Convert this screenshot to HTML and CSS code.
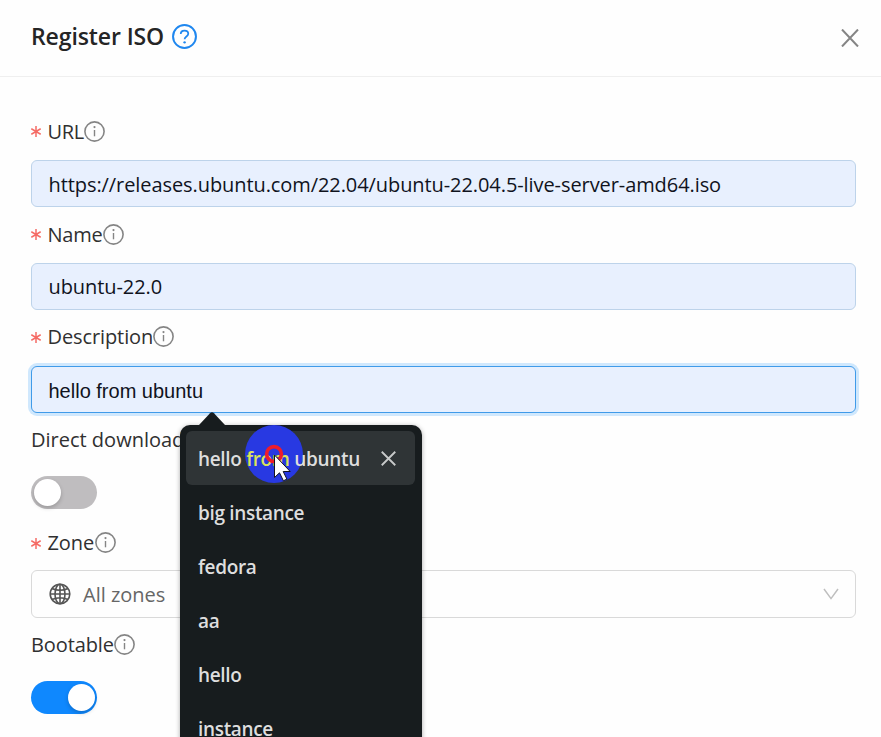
FILE: index.html
```html
<!DOCTYPE html>
<html lang="en">
<head>
<meta charset="utf-8">
<title>Register ISO</title>
<link rel="stylesheet" href="styles.css">
</head>
<body>
<svg class="defs" aria-hidden="true">
  <symbol id="info" viewBox="0 0 22 22"><circle cx="10.5" cy="10.5" r="9.6" fill="none" stroke="currentColor" stroke-width="1.6"/><path d="M10.5 9v6.3" stroke="currentColor" stroke-width="1.4"/><circle cx="10.5" cy="6.1" r="1.1" fill="currentColor"/></symbol>
</svg>
<header class="header">
  <h1 class="title">Register ISO</h1>
  <svg class="help" viewBox="0 0 24 24"><circle cx="12" cy="12" r="11" fill="none" stroke="currentColor" stroke-width="1.9"/><path d="M8.4 9.6C8.4 7.5 10 6.3 12 6.3s3.6 1.2 3.6 3.1c0 2.5-3.5 2.7-3.5 5.2" fill="none" stroke="currentColor" stroke-width="1.7"/><circle cx="12.1" cy="17.6" r="1.15" fill="currentColor"/></svg>
  <svg class="close" viewBox="0 0 18 18"><path d="M1 .5 17 17.5M17 .5 1 17.5" stroke="currentColor" stroke-width="2"/></svg>
</header>
<main class="form">
  <section class="item">
    <div class="label"><svg class="star" viewBox="0 0 10 11"><path d="M5 0v11M.3 2.7l9.4 5.6M9.7 2.7.3 8.3"/></svg><span class="t-url">URL</span><svg class="info"><use href="#info"/></svg></div>
    <div class="input"><span class="value">https://releases.ubuntu.com/22.04/ubuntu-22.04.5-live-server-amd64.iso</span></div>
  </section>
  <section class="item">
    <div class="label"><svg class="star" viewBox="0 0 10 11"><path d="M5 0v11M.3 2.7l9.4 5.6M9.7 2.7.3 8.3"/></svg><span class="t-name">Name</span><svg class="info"><use href="#info"/></svg></div>
    <div class="input"><span class="value">ubuntu-22.0</span></div>
  </section>
  <section class="item">
    <div class="label"><svg class="star" viewBox="0 0 10 11"><path d="M5 0v11M.3 2.7l9.4 5.6M9.7 2.7.3 8.3"/></svg><span class="t-desc">Description</span><svg class="info"><use href="#info"/></svg></div>
    <div class="input focused"><span class="preview">hello from ubuntu</span></div>
  </section>
  <section class="item">
    <div class="label"><span class="t-direct">Direct download</span></div>
    <div class="switch"><i class="knob"></i></div>
  </section>
  <section class="item item-zone">
    <div class="label"><svg class="star" viewBox="0 0 10 11"><path d="M5 0v11M.3 2.7l9.4 5.6M9.7 2.7.3 8.3"/></svg><span class="t-zone">Zone</span><svg class="info"><use href="#info"/></svg></div>
    <div class="input select">
      <svg class="globe" viewBox="0 0 22 22" fill="none" stroke="currentColor" stroke-width="1.6"><circle cx="11" cy="11" r="9.8"/><ellipse cx="11" cy="11" rx="5" ry="9.8"/><path d="M11 1v20M1 11h20M3 5.5q8 3.6 16 0M3 16.5q8-3.6 16 0"/></svg>
      <span class="v-zone">All zones</span>
      <svg class="chevron" viewBox="0 0 16 12"><path d="M1 1l7 9.6L15 1" fill="none" stroke="currentColor" stroke-width="1.5"/></svg>
    </div>
  </section>
  <section class="item">
    <div class="label"><span class="t-boot">Bootable</span><svg class="info"><use href="#info"/></svg></div>
    <div class="switch on"><i class="knob"></i></div>
  </section>
</main>
<div class="menu">
  <svg class="arrow" viewBox="0 0 26 13"><path d="M0 13 11 1.2Q13-.8 15 1.2L26 13z" fill="#171c1e"/></svg>
  <div class="option active"><i class="halo"></i><span>hello <span class="lit">from</span> ubuntu</span><svg class="remove" viewBox="0 0 14 14"><path d="M.7.7l12.6 12.6M13.3.7.7 13.3" stroke="currentColor" stroke-width="1.7"/></svg></div>
  <div class="option"><span>big instance</span></div>
  <div class="option"><span>fedora</span></div>
  <div class="option"><span>aa</span></div>
  <div class="option"><span>hello</span></div>
  <div class="option"><span>instance</span></div>
</div>
<svg class="pointer" viewBox="0 0 30 38"><circle cx="10" cy="10" r="7.4" fill="none" stroke="#ee1c2c" stroke-width="3.6"/><path d="M10.5 11v22.5l5-4.7 3.9 8 3.5-1.7-3.7-7.6h7z" fill="#fff" stroke="#15151f" stroke-width="1"/></svg>
</body>
</html>
```
FILE: styles.css
```css
* { box-sizing: border-box; }
body {
  margin: 0;
  height: 737px;
  position: relative;
  overflow: hidden;
  background: #fefefe;
  color: #303030;
  font: 20px/28px "Open Sans", "Noto Sans", sans-serif;
}
svg { display: block; flex: none; }
.defs { position: absolute; width: 0; height: 0; }
span { white-space: pre; }
.header {
  height: 77px;
  padding: 0 22px 4px 31px;
  display: flex;
  align-items: center;
  border-bottom: 1px solid #efefef;
}
.title { margin: 0; width: 133px; font-size: 23px; font-weight: 600; line-height: 32px; color: #252525; letter-spacing: -.1px; white-space: nowrap; }
.help { width: 25px; height: 25px; margin-left: 7.5px; color: #1f87ef; }
.close { width: 18px; height: 18px; margin: 4px 0 0 auto; color: #858585; }
.form { padding: 40.4px 25px 0 31px; }
.item { height: 102.8px; }
.item-zone { height: 101.8px; }
.label { height: 29px; display: flex; align-items: center; }
.star { width: 10px; height: 11px; margin-right: 6.5px; stroke: #f56b65; stroke-width: 1.5; }
.info { width: 22px; height: 22px; color: #858585; }
.t-url { width: 36.5px; letter-spacing: -.3px; }
.t-name { width: 55.5px; letter-spacing: -.25px; }
.t-desc { width: 105.5px; letter-spacing: -.1px; }
.t-zone { width: 47.5px; letter-spacing: -.1px; }
.t-boot { width: 83px; letter-spacing: -.1px; }
.input {
  height: 47px;
  margin-top: 13.7px;
  padding: 0 16.5px;
  display: flex;
  align-items: center;
  border: 1px solid #bdd3ea;
  border-radius: 6px;
  background: #e8f0fe;
  color: #10131d;
}
.value { padding-top: 2px; letter-spacing: -.08px; }
.focused { border-color: #409be9; box-shadow: 0 0 0 3px #d0e8fd; }
.preview { font-family: "Liberation Sans", sans-serif; padding-top: 3px; }
.select { margin-top: 12.5px; background: #fefefe; border-color: #d9d9d9; height: 48px; color: #666; }
.globe { width: 22px; height: 22px; color: #555; }
.v-zone { margin-left: 12.5px; padding-top: 2px; }
.chevron { width: 16px; height: 12px; margin-left: auto; color: #bebebe; }
.switch { width: 66px; height: 33px; padding: 3px; margin-top: 21.2px; border-radius: 17px; background: #bfbdbf; display: flex; }
.knob { width: 27px; height: 27px; border-radius: 50%; background: #fff; box-shadow: 0 2px 4px #0003; }
.on { justify-content: flex-end; padding-right: 2px; background: #0f88fe; }
.menu {
  position: absolute;
  left: 180px;
  top: 425px;
  width: 242px;
  height: 330px;
  padding: 6px 7px 6px 6px;
  border-radius: 10px;
  background: #171c1e;
  box-shadow: 0 1px 5px #0005;
  color: #dedede;
  font-size: 19px;
  font-weight: 600;
  letter-spacing: -.33px;
}
.arrow { position: absolute; left: 19px; top: -13px; width: 26px; height: 13px; }
.option { position: relative; height: 54px; padding: 2px 19px 0 12px; display: flex; align-items: center; }
.option > span { position: relative; }
.active { background: #2f3436; border-radius: 6px; }
.remove { width: 15px; height: 15px; margin: -2px 0 0 auto; color: #c8caca; }
.lit { color: #dbe35c; }
.halo { position: absolute; left: 59px; top: -6px; width: 58px; height: 58px; border-radius: 50%; background: #2839e2; }
.pointer { position: absolute; left: 264px; top: 444px; width: 30px; height: 38px; }
```
